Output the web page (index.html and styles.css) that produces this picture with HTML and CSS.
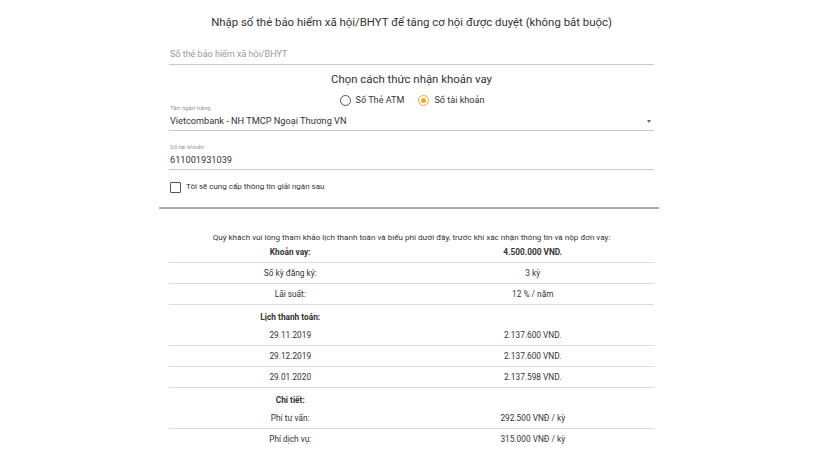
FILE: index.html
```html
<!DOCTYPE html>
<html lang="vi">
<head>
    <meta charset="UTF-8">
    <title>Đăng ký khoản vay</title>
    <link rel="stylesheet" href="styles.css">
</head>
<body>
    <div class="container">
        <h2 class="title">Nhập số thẻ bảo hiểm xã hội/BHYT để tăng cơ hội được duyệt (không bắt buộc)</h2>

        <div class="field field-plain">
            <input type="text" placeholder="Số thẻ bảo hiểm xã hội/BHYT">
        </div>

        <h3 class="subtitle">Chọn cách thức nhận khoản vay</h3>
        <div class="radio-group">
            <label class="radio"><span class="dot"></span>Số Thẻ ATM</label>
            <label class="radio checked"><span class="dot"></span>Số tài khoản</label>
        </div>

        <div class="field">
            <div class="field-label">Tên ngân hàng</div>
            <div class="field-value select">
                <span>Vietcombank - NH TMCP Ngoại Thương VN</span>
                <span class="caret"></span>
            </div>
        </div>

        <div class="field">
            <div class="field-label">Số tài khoản</div>
            <div class="field-value">611001931039</div>
        </div>

        <label class="check"><span class="box"></span>Tôi sẽ cung cấp thông tin giải ngân sau</label>

        <div class="divider"></div>

        <p class="notice">Quý khách vui lòng tham khảo lịch thanh toán và biểu phí dưới đây, trước khi xác nhận thông tin và nộp đơn vay:</p>

        <div class="summary">
            <div class="row head"><span>Khoản vay:</span><span>4.500.000 VND.</span></div>
            <div class="row"><span>Số kỳ đăng ký:</span><span>3 kỳ</span></div>
            <div class="row"><span>Lãi suất:</span><span>12 % / năm</span></div>
            <div class="row head section"><span>Lịch thanh toán:</span><span></span></div>
            <div class="row"><span>29.11.2019</span><span>2.137.600 VND.</span></div>
            <div class="row"><span>29.12.2019</span><span>2.137.600 VND.</span></div>
            <div class="row"><span>29.01.2020</span><span>2.137.598 VND.</span></div>
            <div class="row head section"><span>Chi tiết:</span><span></span></div>
            <div class="row"><span>Phí tư vấn:</span><span>292.500 VNĐ / kỳ</span></div>
            <div class="row last"><span>Phí dịch vụ:</span><span>315.000 VNĐ / kỳ</span></div>
        </div>
    </div>
</body>
</html>
```

FILE: styles.css
```css
:root {
    --text-color: #333;
    --muted: #9a9a9a;
    --line: #c8c8c8;
    --accent: #f5a623;
}

* {
    margin: 0;
    padding: 0;
    box-sizing: border-box;
}

body {
    font-family: Roboto, 'Liberation Sans', Arial, sans-serif;
    background: #fff;
    color: var(--text-color);
}

.container {
    width: 500px;
    margin: 0 auto;
    padding: 13px 5px 0 10px;
}

.title,
.subtitle {
    font-size: 11.4px;
    font-weight: normal;
    text-align: center;
}

.title {
    line-height: 18px;
}

.subtitle {
    line-height: 16px;
    margin-top: 6px;
}

/* underlined inputs */
.field {
    border-bottom: 1px solid var(--line);
}

.field-plain {
    margin-top: 16px;
}

.field input {
    display: block;
    width: 100%;
    border: none;
    outline: none;
    font-family: inherit;
    font-size: 9px;
    line-height: 14px;
    height: 17px;
    padding: 0 0 3px 1px;
    color: var(--text-color);
}

.field input::placeholder {
    color: var(--muted);
}

.field-label {
    font-size: 6.2px;
    color: var(--muted);
    line-height: 6px;
    padding-left: 1px;
}

.field + .field {
    margin-top: 13px;
}

.field-value {
    font-size: 9.2px;
    line-height: 14px;
    padding: 3px 0 2px 1px;
}

.select {
    display: flex;
    justify-content: space-between;
    align-items: center;
}

.caret {
    width: 0;
    height: 0;
    border-left: 2.5px solid transparent;
    border-right: 2.5px solid transparent;
    border-top: 3px solid #666;
    margin-right: 3px;
}

/* radios */
.radio-group {
    display: flex;
    justify-content: center;
    gap: 14px;
    margin: 7px 0 -1px;
    padding-left: 1px;
}

.radio {
    display: flex;
    align-items: center;
    gap: 5px;
    font-size: 9.1px;
    line-height: 12px;
}

.radio .dot {
    width: 11px;
    height: 11px;
    border: 1px solid #555;
    border-radius: 50%;
    position: relative;
}

.radio.checked .dot {
    border-color: var(--accent);
}

.radio.checked .dot::after {
    content: '';
    position: absolute;
    left: 2px;
    top: 2px;
    width: 5px;
    height: 5px;
    border-radius: 50%;
    background: var(--accent);
}

/* checkbox */
.check {
    display: flex;
    align-items: center;
    gap: 5px;
    font-size: 8px;
    line-height: 12px;
    margin: 11px 0 0 1px;
}

.check .box {
    width: 11px;
    height: 11px;
    border: 1px solid #555;
    border-radius: 1px;
}

.divider {
    height: 2px;
    background: #adadad;
    margin: 14px -5px 0 -10px;
    box-shadow: 0 4px 5px rgba(0, 0, 0, 0.04);
}

.notice {
    font-size: 8.1px;
    text-align: center;
    line-height: 10px;
    margin-top: 23px;
}

/* payment summary */
.summary {
    font-size: 8.3px;
}

.row {
    display: grid;
    grid-template-columns: 1fr 1fr;
    text-align: center;
    line-height: 20px;
    border-bottom: 1px solid #dcdcdc;
}

.row.head {
    font-weight: bold;
}

.row.section {
    border-bottom: none;
    line-height: 15px;
    padding-top: 5px;
}

.row.last {
    border-bottom: none;
}
```
